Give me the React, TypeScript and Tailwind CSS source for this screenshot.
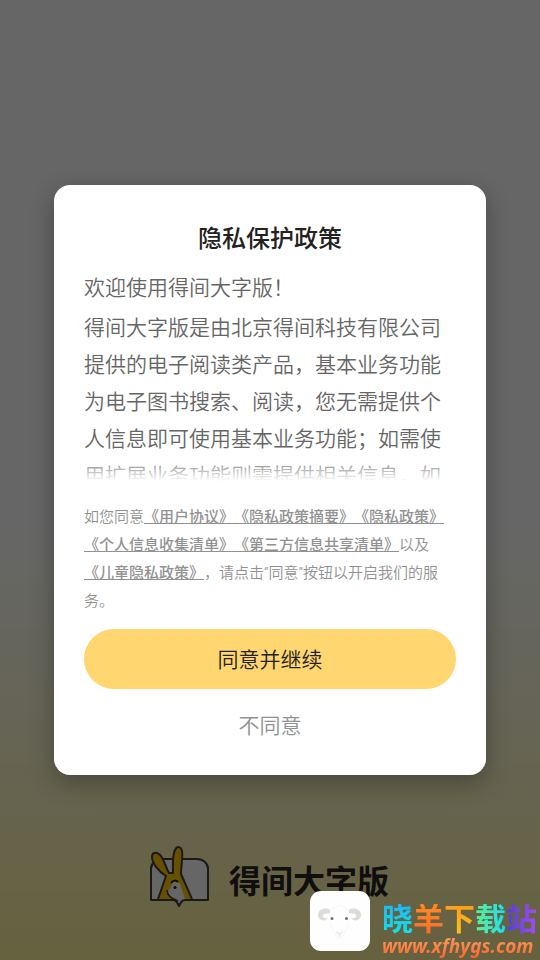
import React from 'react';

function RabbitLogo() {
  return (
    <svg viewBox="0 0 64 64" className="h-16 w-16 shrink-0" fill="none" aria-hidden="true">
      <path
        d="M4 55V24c0-6 5-10 11-10h35c6 0 11 4 11 10v31H38c-3 0-4 2-6 6-2-4-3-6-6-6Z"
        fill="#ffffff"
        stroke="#48403c"
        strokeWidth="2"
        strokeLinejoin="round"
      />
      <path d="M11 54l8-23C11 26 5 18 5 12c0-5 5-6 9-1 4 6 5 12 8 17h4c0-9-1-17 2-23 2-4 6-4 7 1 1 7-1 15-1 23l11 25H11Z" fill="#ffca00" />
      <path d="M20 46c2 0 4-4 5-7 2-3 6-3 8 0l5 15h-7c-6-1-10-4-11-8Z" fill="#ffffff" />
      <path
        d="M11 54l8-23C11 26 5 18 5 12c0-5 5-6 9-1 4 6 5 12 8 17h4c0-9-1-17 2-23 2-4 6-4 7 1 1 7-1 15-1 23l11 25"
        stroke="#48403c"
        strokeWidth="2"
        strokeLinejoin="round"
      />
      <path d="M20 45c0 5 5 9 11 11" stroke="#48403c" strokeWidth="1.6" />
      <path d="M24 38c2-3 5-3 7-1" stroke="#2a2625" strokeWidth="2" />
      <circle cx="28" cy="42.500" r="1.600" fill="#2a2625" />
    </svg>
  );
}

function SheepIcon() {
  return (
    <svg viewBox="0 0 60 60" className="h-[60px] w-[60px] shrink-0" fill="none" aria-hidden="true">
      <rect width="60" height="60" rx="11" fill="#fefefe" />
      <path d="M20 19c-4-3-12-1-12 5s8 7 10 3c-3 1-6-1-5-3s4-1 7-2Z" fill="#dedcd6" />
      <path d="M39 19c4-3 12-1 12 5s-8 7-10 3c3 1 6-1 5-3s-4-1-7-2Z" fill="#dedcd6" />
      <path d="M20 20c2-4 5-2 6-4 2-2 5-2 7 0 1 2 4 0 6 4" stroke="#f8f7f6" />
      <path d="M20 31c2 7 5 11 6 14 2 3 5 3 7 0 1-3 4-7 6-14" stroke="#f8f7f6" />
      <circle cx="22" cy="27.500" r="1.500" fill="#6d7472" />
      <circle cx="36.500" cy="27.500" r="1.500" fill="#6d7472" />
      <path d="M26 41l3.500 2 3.500-2M29.500 43v3" stroke="#e4dfdb" />
    </svg>
  );
}

function PolicyLink({ children }: { children: React.ReactNode }) {
  return (
    <a
      href="#"
      className="font-medium text-[#929292] underline decoration-1 underline-offset-1 [text-decoration-skip-ink:none]"
    >
      {children}
    </a>
  );
}

function PrivacyDialog() {
  return (
    <div
      role="dialog"
      aria-modal="true"
      aria-labelledby="privacy-title"
      className="flex w-4/5 flex-col rounded-2xl bg-white px-[30px] pt-9 pb-7 shadow-[0_8px_24px_rgba(0,0,0,0.3)]"
    >
      <h1 id="privacy-title" className="text-center text-2xl leading-9 font-medium text-[#222222]">
        隐私保护政策
      </h1>

      <div className="relative mt-[13px] h-[211px] overflow-hidden text-[21px] leading-[37px] font-[350] text-[#666666]">
        <p>欢迎使用得间大字版！</p>
        <p className="mt-[3px]">
          得间大字版是由北京得间科技有限公司提供的电子阅读类产品，基本业务功能为电子图书搜索、阅读，您无需提供个人信息即可使用基本业务功能；如需使用扩展业务功能则需提供相关信息。如
        </p>
        <div className="absolute inset-x-0 bottom-0 h-6 bg-linear-to-t from-white to-white/0" />
      </div>

      <p className="mt-[22px] text-[15px] leading-7 font-[350] text-[#929292]">
        如您同意<PolicyLink>《用户协议》</PolicyLink>
        <PolicyLink>《隐私政策摘要》</PolicyLink>
        <PolicyLink>《隐私政策》</PolicyLink>
        <PolicyLink>《个人信息收集清单》</PolicyLink>
        <PolicyLink>《第三方信息共享清单》</PolicyLink>以及
        <PolicyLink>《儿童隐私政策》</PolicyLink>，请点击“同意”按钮以开启我们的服务。
      </p>

      <button
        type="button"
        className="mt-[14px] h-[60px] rounded-full bg-[#ffd66f] pt-1 text-[21px] font-[350] text-[#222222]"
      >
        同意并继续
      </button>
      <button type="button" className="mt-[14px] h-11 self-center px-6 pt-1 text-[21px] font-[350] text-[#929292]">
        不同意
      </button>
    </div>
  );
}

function SiteBadge() {
  return (
    <div className="absolute right-[3px] bottom-0 flex items-start gap-3">
      <SheepIcon />
      <div className="flex flex-col pt-[13px]">
        <div className="flex text-[31px] leading-8 font-bold">
          <span className="bg-linear-to-b from-[#1fb6f5] to-[#10e6e6] bg-clip-text text-transparent">晓</span>
          <span className="bg-linear-to-b from-[#ff8a1c] to-[#ff6a2c] bg-clip-text text-transparent">羊</span>
          <span className="bg-linear-to-b from-[#ff9c1c] to-[#ffc21c] bg-clip-text text-transparent">下</span>
          <span className="bg-linear-to-r from-[#5cf08c] to-[#10dcf0] bg-clip-text text-transparent">载</span>
          <span className="bg-linear-to-r from-[#4c3cdc] to-[#a44cf8] bg-clip-text text-transparent">站</span>
        </div>
        <span className="bg-linear-to-b from-[#f5a060] to-[#ff5a20] bg-clip-text pb-1 font-['Noto_Sans'] text-[19px] leading-5 font-bold text-transparent italic">
          www.xfhygs.com
        </span>
      </div>
    </div>
  );
}

export default function App() {
  return (
    <div className="relative flex min-h-screen flex-col justify-end bg-linear-to-b from-white from-55% to-[#fff59c] font-['Roboto','Noto_Sans_CJK_SC',sans-serif] [text-spacing-trim:space-all]">
      <div className="flex items-center justify-center gap-[18px] pr-1 pb-[51px]">
        <RabbitLogo />
        <span className="pt-[10px] text-[32px] leading-10 font-bold text-[#2a2625]">得间大字版</span>
      </div>

      <div className="absolute inset-0 flex items-center justify-center bg-black/60">
        <PrivacyDialog />
      </div>

      <SiteBadge />
    </div>
  );
}
